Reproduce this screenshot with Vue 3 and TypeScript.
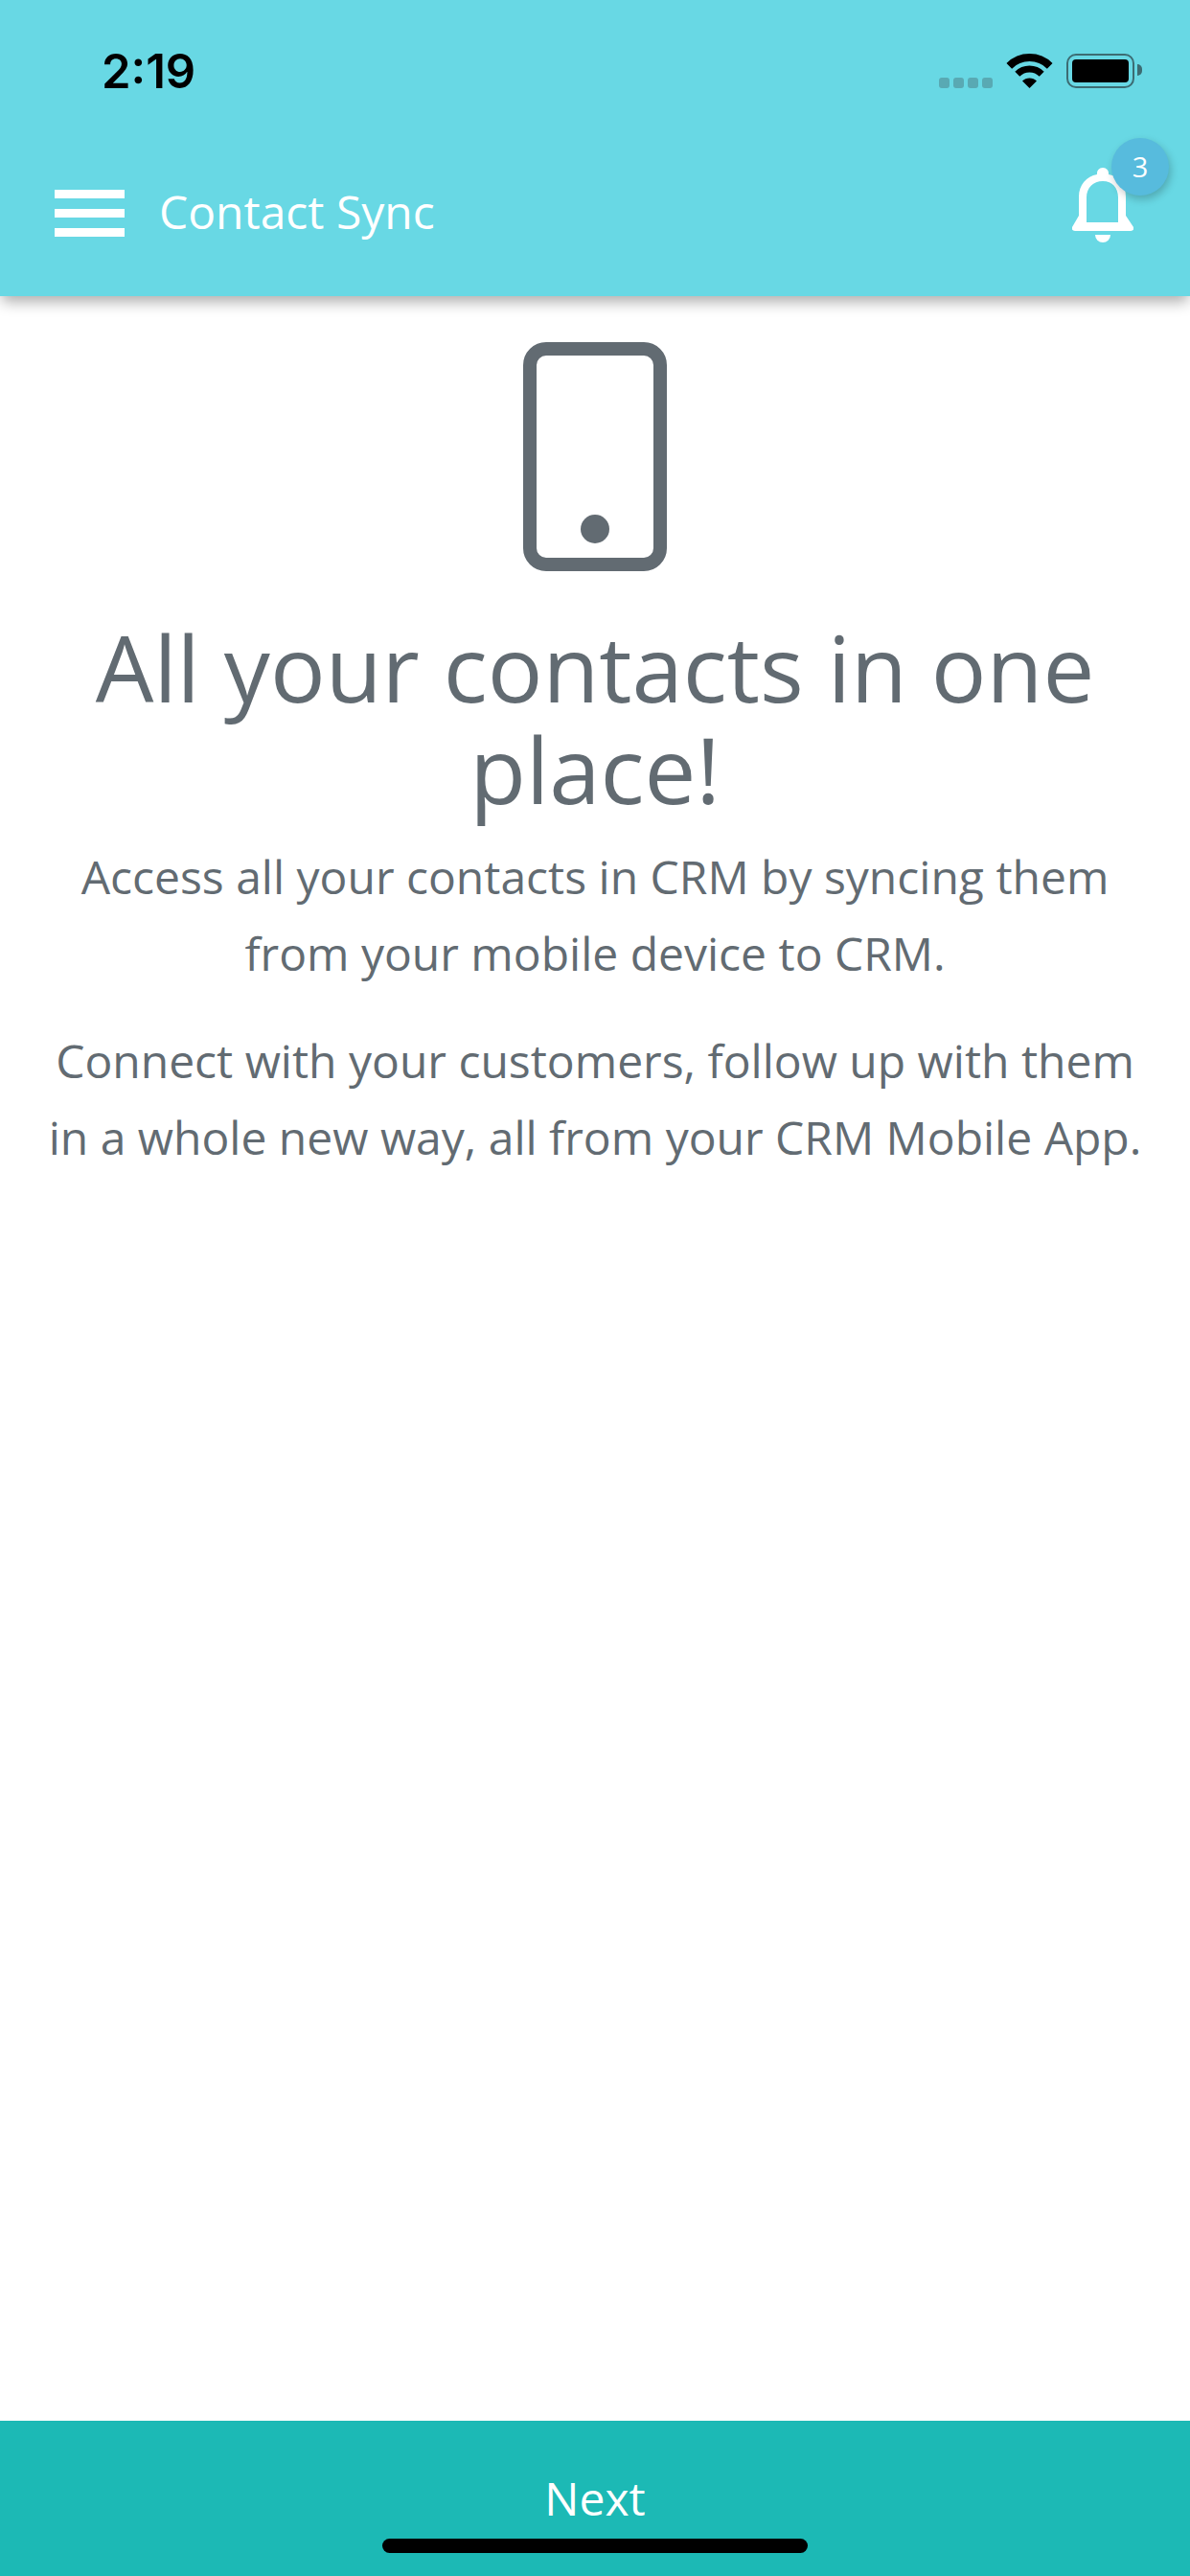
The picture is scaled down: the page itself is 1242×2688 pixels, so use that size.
<script setup lang="ts">
const title = 'All your contacts in one place!'
const paragraphs: string[] = [
  'Access all your contacts in CRM by syncing them from your mobile device to CRM.',
  'Connect with your customers, follow up with them in a whole new way, all from your CRM Mobile App.',
]
</script>

<template>
  <div class="screen">
    <header class="header">
      <div class="status">
        <span class="time">2:19</span>
        <div class="status-icons">
          <div class="dots"><i></i><i></i><i></i><i></i></div>
          <svg class="wifi" width="49" height="36" viewBox="0 0 49 36">
            <path d="M3.3 12.8A30 30 0 0 1 45.7 12.8" fill="none" stroke="#000" stroke-width="8" />
            <path d="M11.8 21.3A18 18 0 0 1 37.2 21.3" fill="none" stroke="#000" stroke-width="7" />
            <path d="M24.5 36L17 28.5A10.6 10.6 0 0 1 32 28.5Z" fill="#000" />
          </svg>
          <div class="battery"><span class="battery-fill"></span><span class="battery-nub"></span></div>
        </div>
      </div>
      <div class="toolbar">
        <div class="burger"><i></i><i></i><i></i></div>
        <span class="bar-title">Contact Sync</span>
        <div class="bell">
          <svg width="64" height="78" viewBox="0 0 64 78">
            <path fill="#fff" fill-rule="evenodd" d="M32 0A6 6 0 0 1 38 7C49 9 56 18 56 30V50L64 62Q65 66 61 66H3Q-1 66 0 62L7 50V30C7 18 15 9 26 7A6 6 0 0 1 32 0ZM32 14C22 14 15 21 15 31V57H48V31C48 21 42 14 32 14Z" />
            <path fill="#fff" d="M24 70H40A8 8 0 0 1 24 70Z" />
          </svg>
          <span class="badge">3</span>
        </div>
      </div>
    </header>

    <main class="content">
      <svg class="phone" width="150" height="239" viewBox="0 0 150 239">
        <rect x="7" y="7" width="136" height="225" rx="17" fill="none" stroke="#626b72" stroke-width="14" />
        <circle cx="75" cy="195" r="15" fill="#626b72" />
      </svg>
      <h1 class="title">{{ title }}</h1>
      <p v-for="p in paragraphs" :key="p" class="text">{{ p }}</p>
    </main>

    <footer class="footer">
      <span class="next">Next</span>
      <span class="home"></span>
    </footer>
  </div>
</template>

<style>
html, body { margin: 0; background: #fff; }
</style>

<style scoped>
.screen {
  width: 1242px;
  height: 2688px;
  display: flex;
  flex-direction: column;
  background: #fff;
  font-family: "Open Sans", "Noto Sans", sans-serif;
  overflow: hidden;
}
.header {
  height: 309px;
  flex: none;
  background: #68d8e4;
  box-shadow: 0 8px 14px -2px rgba(0, 0, 0, 0.32);
  position: relative;
  z-index: 1;
}
.status {
  height: 135px;
  box-sizing: border-box;
  display: flex;
  justify-content: space-between;
  padding: 56px 58px 0 106px;
}
.time {
  font-family: Inter, "Liberation Sans", sans-serif;
  font-weight: 600;
  font-size: 49px;
  line-height: 38px;
  height: 38px;
  color: #000;
}
.status-icons {
  display: flex;
  align-items: flex-start;
}
.dots {
  display: flex;
  gap: 4px;
  margin-top: 25px;
  margin-right: 14px;
}
.dots i {
  width: 11px;
  height: 11px;
  border-radius: 3px;
  background: #59a9b3;
}
.battery {
  width: 71px;
  height: 36px;
  margin-left: 14px;
  box-sizing: border-box;
  border: 2px solid #3c6c73;
  border-radius: 10px;
  padding: 4px;
  position: relative;
}
.battery-fill {
  display: block;
  height: 100%;
  background: #000;
  border-radius: 4px;
}
.battery-nub {
  position: absolute;
  left: 72px;
  top: 9px;
  width: 5px;
  height: 12px;
  background: #3c6c73;
  border-radius: 0 5px 5px 0;
}
.toolbar {
  height: 174px;
  display: flex;
  align-items: center;
  padding: 0 59px 0 57px;
}
.burger {
  width: 73px;
  display: flex;
  flex-direction: column;
  gap: 11px;
}
.burger i {
  height: 9px;
  background: #fff;
}
.bar-title {
  margin-left: 36px;
  margin-bottom: 4px;
  font-size: 48px;
  font-weight: 400;
  color: #fff;
  flex: 1;
}
.bell {
  width: 64px;
  height: 78px;
  margin-bottom: 16px;
  position: relative;
}
.bell svg {
  display: block;
}
.badge {
  position: absolute;
  left: 41px;
  top: -31px;
  width: 60px;
  height: 60px;
  border-radius: 50%;
  background: #57bbdd;
  color: #fff;
  font-size: 29px;
  line-height: 60px;
  text-align: center;
  box-shadow: 2px 4px 8px rgba(0, 0, 0, 0.22);
}
.content {
  flex: 1;
  display: flex;
  flex-direction: column;
  align-items: center;
  padding: 48px 48px 0;
  color: #626b72;
  text-align: center;
}
.phone {
  flex: none;
}
.title {
  margin: 47px 0 20px;
  font-size: 96px;
  font-weight: 400;
  line-height: 106px;
}
.text {
  margin: 0 0 32px;
  font-size: 48px;
  line-height: 80px;
  font-weight: 400;
}
.footer {
  height: 162px;
  flex: none;
  box-sizing: border-box;
  background: #1cb9b5;
  display: flex;
  flex-direction: column;
  align-items: center;
  padding-top: 48px;
  position: relative;
}
.next {
  font-size: 48px;
  font-weight: 400;
  line-height: 66px;
  color: #fff;
}
.home {
  position: absolute;
  left: 399px;
  top: 123px;
  width: 444px;
  height: 15px;
  border-radius: 8px;
  background: #000;
}
</style>
